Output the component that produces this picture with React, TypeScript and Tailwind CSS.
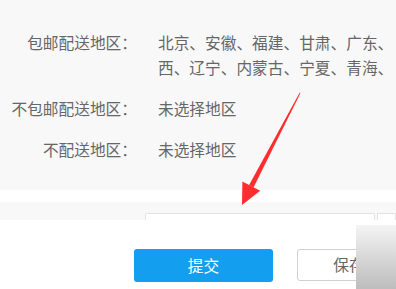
import React, { FC } from 'react'

const font = {
  fontFamily: '"Noto Sans CJK SC", "Noto Sans", sans-serif',
}

const AreaRow: FC<{ label: string; lines: string[] }> = ({ label, lines }) => {
  return (
    <div className="flex text-[15.7px] leading-[25px] text-[#666]">
      <span className="w-[137px] shrink-0 text-right whitespace-nowrap">{label}</span>
      <div className="ml-[21px] flex flex-col">
        {lines.map((line) => (
          <span key={line} className="whitespace-nowrap">
            {line}
          </span>
        ))}
      </div>
    </div>
  )
}

const Arrow: FC = () => {
  // shaft tapers from (300,93) towards the head whose tip sits at (242,204)
  return (
    <svg
      className="absolute left-0 top-0 pointer-events-none"
      width="396"
      height="289"
      viewBox="0 0 396 289"
    >
      <polygon
        points="300.4,93.2 299.6,92.8 249.1,185.0 253.5,187.4"
        fill="#ff2d2d"
      />
      <polygon points="242.4,181.6 260.2,190.8 242,205" fill="#ff2d2d" />
    </svg>
  )
}

const App: FC = () => {
  return (
    <div
      className="relative w-[396px] h-[289px] overflow-hidden bg-white"
      style={font}
    >
      <div className="h-[190px] bg-[#f8f8f8] pt-[30px] flex flex-col gap-4">
        <AreaRow
          label="包邮配送地区："
          lines={['北京、安徽、福建、甘肃、广东、', '西、辽宁、内蒙古、宁夏、青海、']}
        />
        <AreaRow label="不包邮配送地区：" lines={['未选择地区']} />
        <AreaRow label="不配送地区：" lines={['未选择地区']} />
      </div>
      <div className="h-[12px] bg-white" />
      <div className="h-[18px] bg-[#f8f8f8] flex items-end pl-[145px] gap-[2px]">
        <div className="w-[241px] h-[7px] bg-white border border-b-0 border-[#e2e2e2] rounded-t-[2px]" />
        <div className="w-[20px] h-[7px] bg-white border border-b-0 border-[#e2e2e2]" />
      </div>
      <div className="flex pl-[134px] pt-[29px] gap-[24px]">
        <button className="w-[139px] h-[33px] shrink-0 rounded-[3px] bg-[#149ef0] text-white text-[15.7px]">
          提交
        </button>
        <button className="w-[104px] h-[32px] shrink-0 rounded-[3px] border border-[#d0d0d0] bg-white text-[#666] text-[15.7px]">
          保存
        </button>
      </div>
      <div className="absolute left-[356px] top-[225px] w-[40px] h-[64px] bg-gradient-to-b from-[#f4f4f4] to-[#bdbdbd]" />
      <Arrow />
    </div>
  )
}

export default App
